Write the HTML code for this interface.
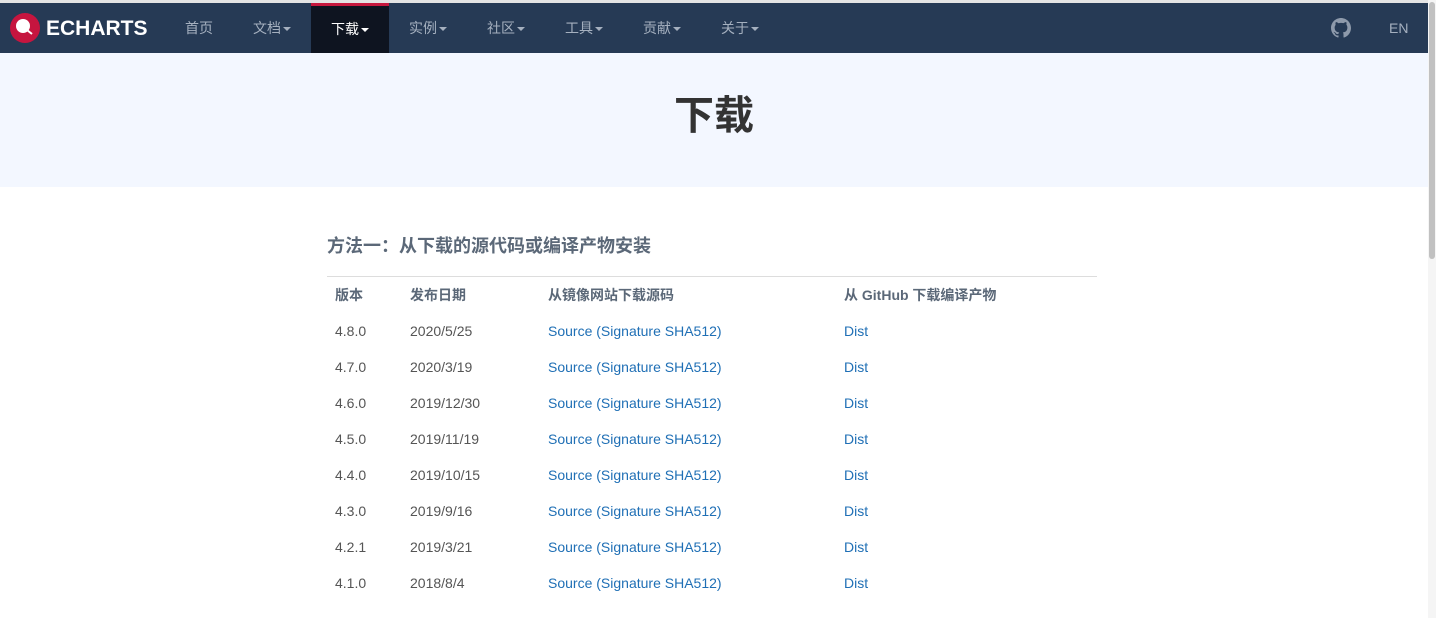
<!DOCTYPE html><html><head><meta charset="utf-8"><style>
body{margin:0;width:1436px;height:618px;overflow:hidden;background:#fff;font-family:"Liberation Sans","Noto Sans CJK SC",sans-serif;position:relative}
.top{position:absolute;left:0;top:0;width:1428px;height:3px;background:#e4e4e4}
nav{position:absolute;left:0;top:3px;width:1428px;height:50px;background:#263a55;color:#a5b0bf;font-size:14px}
nav .i{position:absolute;top:0;height:50px;line-height:50px}
.car{display:inline-block;border-left:4px solid transparent;border-right:4px solid transparent;border-top:4px solid currentColor;vertical-align:middle;margin-left:2px}
.act{background:#0e1420;color:#fff;border-top:3px solid #c6183e;height:47px!important;line-height:46px!important;width:78px;left:311px;text-align:center}
.banner{position:absolute;left:0;top:53px;width:1428px;height:134px;background:#f3f7ff}
.banner h1{margin:0;position:absolute;left:0;right:0;top:39px;text-align:center;font-size:40px;color:#333;line-height:48px}
.sb{position:absolute;left:1428px;top:0;width:8px;height:618px;background:#f5f5f5}
.sb div{position:absolute;left:1px;top:2px;width:6px;height:257px;background:#c1c1c1;border-radius:3px}
h2{position:absolute;left:327px;top:234px;margin:0;font-size:18px;color:#5b6878;font-weight:bold;line-height:24px}
.line{position:absolute;left:327px;top:276px;width:770px;height:1px;background:#ddd}
.r{position:absolute;font-size:14px;color:#555;line-height:20px}
.h{font-weight:bold;color:#5b6878}
a{color:#1f6fb5;text-decoration:none}
</style></head><body>
<div class="top"></div>
<nav>
<div class="i" style="left:9px;line-height:0"><svg width="140" height="50"><circle cx="16" cy="25" r="15" fill="#c6153f"/><circle cx="14" cy="23" r="7" fill="#fff"/><path d="M18 27l5 4" stroke="#fff" stroke-width="2"/><text x="37" y="32" fill="#fff" font-size="21" font-weight="bold" font-family="Liberation Sans">ECHARTS</text></svg></div>
<div class="i" style="left:185px">首页</div>
<div class="i" style="left:253px">文档<span class="car"></span></div>
<div class="i act">下载<span class="car"></span></div>
<div class="i" style="left:409px">实例<span class="car"></span></div>
<div class="i" style="left:487px">社区<span class="car"></span></div>
<div class="i" style="left:565px">工具<span class="car"></span></div>
<div class="i" style="left:643px">贡献<span class="car"></span></div>
<div class="i" style="left:721px">关于<span class="car"></span></div>
<div class="i" style="left:1331px;top:15px;height:20px;line-height:0;display:flex;align-items:center"><svg width="20" height="20" viewBox="0 0 16 16"><path fill="#8e9aab" d="M8 0C3.58 0 0 3.580 0 8c0 3.54 2.29 6.53 5.47 7.59.4.07.55-.17.55-.38v-1.33c-2.23.49-2.7-1.07-2.7-1.07-.36-.92-.89-1.17-.89-1.17-.73-.5.05-.49.05-.49.8.06 1.23.83 1.23.83.71 1.23 1.87.87 2.33.66.07-.52.28-.87.51-1.07-1.780-.2-3.64-.89-3.64-3.95 0-.87.31-1.59.82-2.15-.08-.2-.36-1.02.08-2.12 0 0 .67-.21 2.2.82A7.5 7.5 0 018 3.86c.68 0 1.36.09 2 .27 1.53-1.04 2.2-.82 2.2-.82.44 1.1.16 1.92.08 2.12.51.56.82 1.27.82 2.15 0 3.07-1.87 3.75-3.65 3.95.29.25.54.73.54 1.48v2.2c0 .21.15.46.55.38A8.01 8.01 0 0016 8c0-4.42-3.58-8-8-8z"/></svg></div>
<div class="i" style="left:1389px">EN</div>
</nav>
<div class="banner"><h1>下载</h1></div>
<div class="sb"><div></div></div>
<h2>方法一：从下载的源代码或编译产物安装</h2>
<div class="line"></div>
<div class="r h" style="left:335px;top:285px">版本</div>
<div class="r h" style="left:410px;top:285px">发布日期</div>
<div class="r h" style="left:548px;top:285px">从镜像网站下载源码</div>
<div class="r h" style="left:844px;top:285px">从 GitHub 下载编译产物</div>
<div id="rows"></div>
<script>
var d=[["4.8.0","2020/5/25"],["4.7.0","2020/3/19"],["4.6.0","2019/12/30"],["4.5.0","2019/11/19"],["4.4.0","2019/10/15"],["4.3.0","2019/9/16"],["4.2.1","2019/3/21"],["4.1.0","2018/8/4"]],h="";
d.forEach(function(r,i){var t=321+i*36;h+='<div class="r" style="left:335px;top:'+t+'px">'+r[0]+'</div><div class="r" style="left:410px;top:'+t+'px">'+r[1]+'</div><div class="r" style="left:548px;top:'+t+'px;color:#1f6fb5"><a>Source</a> (<a>Signature</a> <a>SHA512</a>)</div><div class="r" style="left:844px;top:'+t+'px"><a>Dist</a></div>';});
document.getElementById("rows").innerHTML=h;
</script>
</body></html>
